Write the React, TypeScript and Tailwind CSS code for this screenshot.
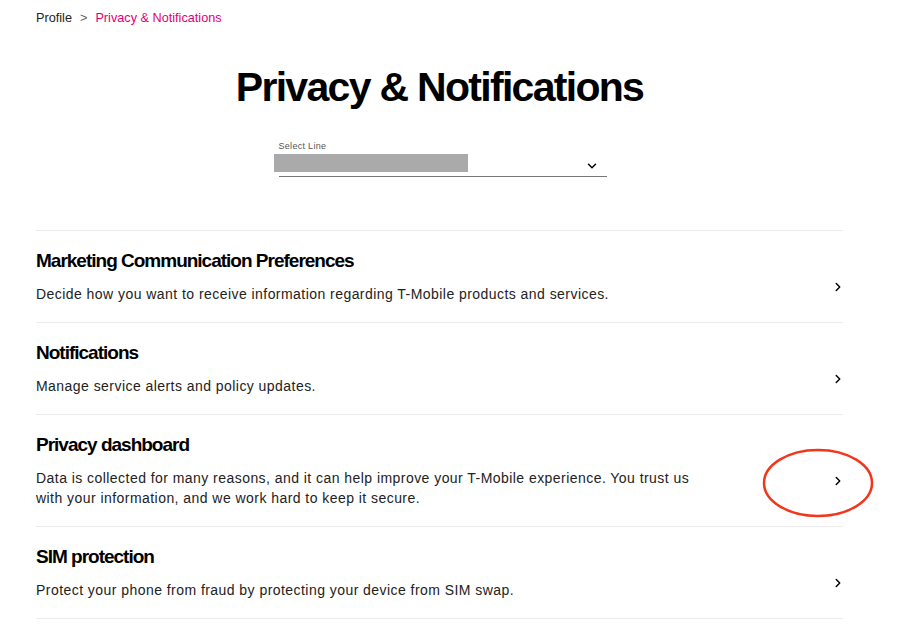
import { ChevronDown, ChevronRight } from "lucide-react"

interface Item {
  title: string
  body: string[]
  circled?: boolean
}

const items: Item[] = [
  {
    title: "Marketing Communication Preferences",
    body: ["Decide how you want to receive information regarding T-Mobile products and services."],
  },
  {
    title: "Notifications",
    body: ["Manage service alerts and policy updates."],
  },
  {
    title: "Privacy dashboard",
    body: [
      "Data is collected for many reasons, and it can help improve your T-Mobile experience. You trust us",
      "with your information, and we work hard to keep it secure.",
    ],
    circled: true,
  },
  {
    title: "SIM protection",
    body: ["Protect your phone from fraud by protecting your device from SIM swap."],
  },
]

function Row({ item }: { item: Item }) {
  return (
    <div className="relative flex items-center border-b border-[#ececec] pt-[17px] pb-[18px]">
      <div className="flex-1">
        <h2 className="text-[19px] font-bold leading-[26px] tracking-[-1px] text-black">{item.title}</h2>
        <div className="mt-[10px] text-[14px] leading-[20px] tracking-[0.45px] text-[#222]">
          {item.body.map((line) => (
            <p key={line}>{line}</p>
          ))}
        </div>
      </div>
      <div className="mr-[-2px] mt-[22px] text-black">
        <ChevronRight size={14} strokeWidth={2.5} />
      </div>
      {item.circled && (
        <svg
          className="pointer-events-none absolute right-[-32px] top-[31px]"
          width="114"
          height="74"
          viewBox="0 0 114 74"
        >
          <ellipse cx="57" cy="37" rx="54" ry="33" fill="none" stroke="#f2361b" strokeWidth="2.5" />
        </svg>
      )}
    </div>
  )
}

export default function App() {
  return (
    <div className="min-h-[636px] bg-white font-['Liberation_Sans',Arial,sans-serif]">
      <div className="ml-[36px] w-[807px]">
        {/* Breadcrumb */}
        <div className="flex items-center pt-[10px] text-[12.7px] leading-[16px]">
          <span className="text-[#222]">Profile</span>
          <span className="mx-[8px] text-[#666]">&gt;</span>
          <span className="text-[#e20074]">Privacy &amp; Notifications</span>
        </div>

        {/* Title */}
        <h1 className="mt-[37px] text-center text-[41px] font-bold leading-[48px] tracking-[-1.7px] text-black">
          Privacy &amp; Notifications
        </h1>

        {/* Line select */}
        <div className="mt-[30px] flex justify-center">
          <div className="relative ml-[6px] w-[328px]">
            <div className="text-[9px] leading-[11px] tracking-[0.3px] text-[#555]">Select Line</div>
            <div className="mt-[3px] flex h-[22px] items-center justify-end border-b-[1.5px] border-[#777] pr-[8px]">
              <ChevronDown size={14} strokeWidth={2.5} className="text-black" />
            </div>
            <div className="absolute left-[-5px] top-[13px] h-[18px] w-[194px] bg-[#aaaaaa]" />
          </div>
        </div>

        {/* List */}
        <div className="mt-[53px] border-t border-[#ececec]">
          {items.map((item) => (
            <Row key={item.title} item={item} />
          ))}
        </div>
      </div>
    </div>
  )
}
